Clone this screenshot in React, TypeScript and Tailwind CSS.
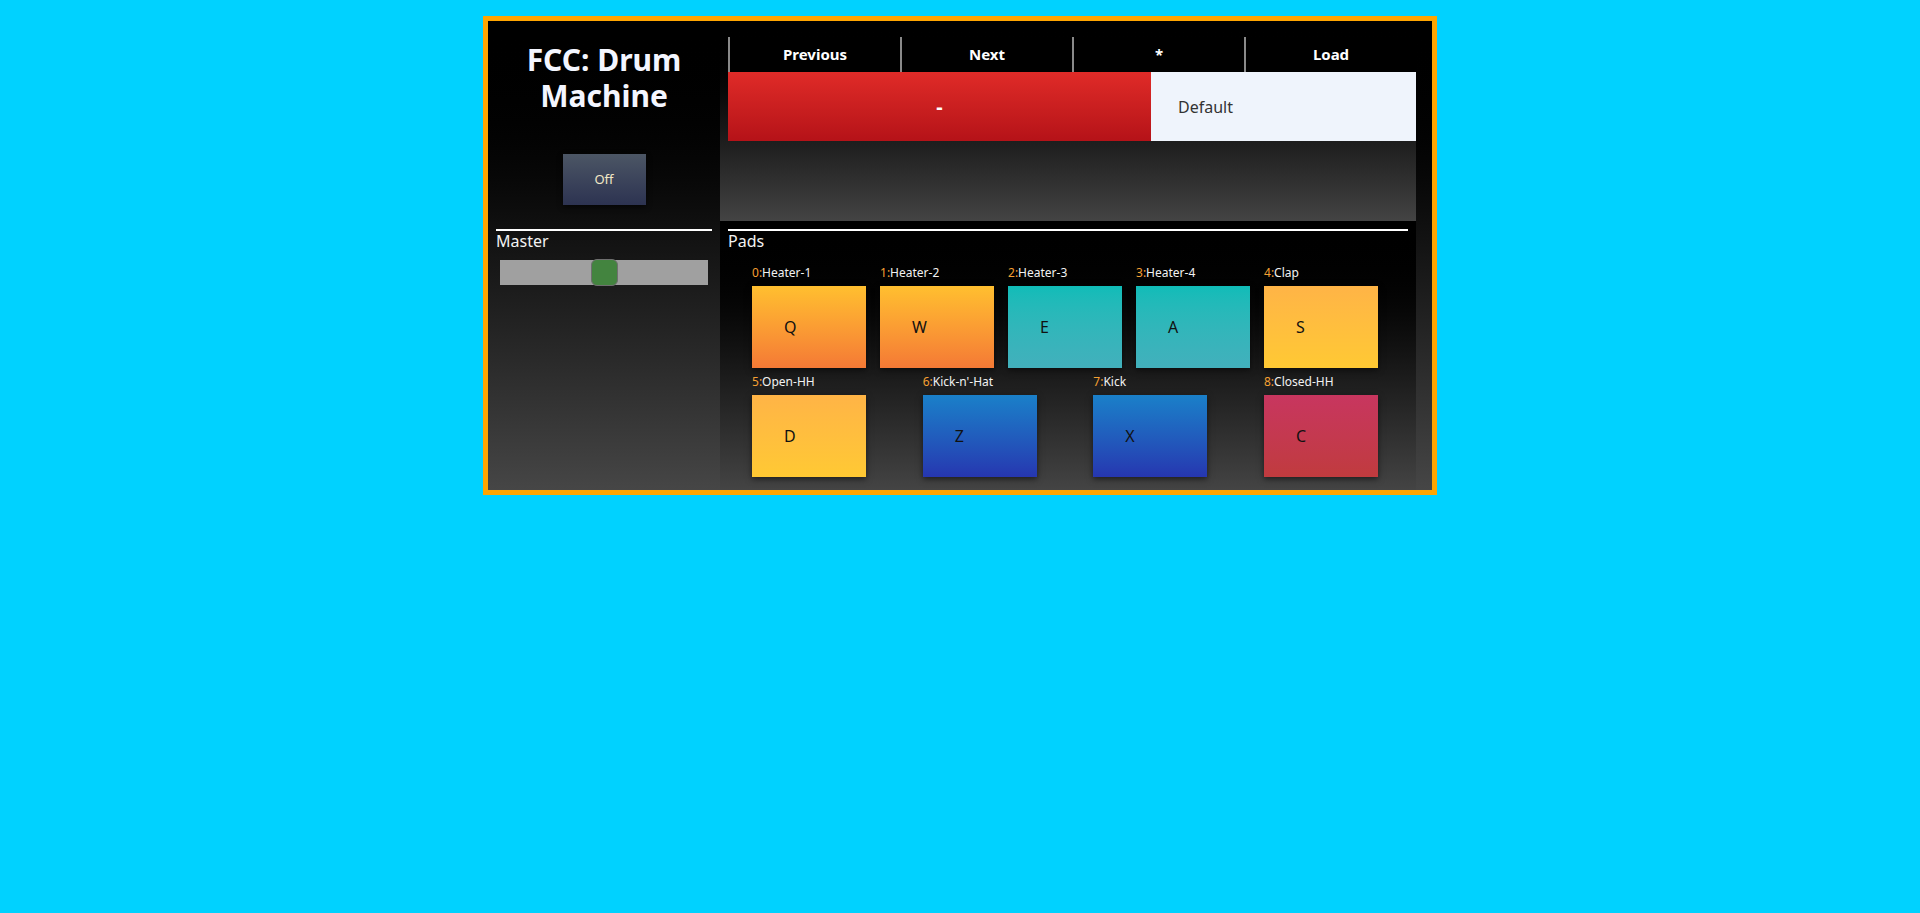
import { useState } from 'react';

type Pad = { id: number; name: string; key: string; color: string };

const rowOne: Pad[] = [
  { id: 0, name: 'Heater-1', key: 'Q', color: 'bg-gradient-to-b from-[#ffbf2f] to-[#f47935]' },
  { id: 1, name: 'Heater-2', key: 'W', color: 'bg-gradient-to-b from-[#ffbf2f] to-[#f47935]' },
  { id: 2, name: 'Heater-3', key: 'E', color: 'bg-gradient-to-b from-[#0fbcb8] to-[#42b0bc]' },
  { id: 3, name: 'Heater-4', key: 'A', color: 'bg-gradient-to-b from-[#0fbcb8] to-[#42b0bc]' },
  { id: 4, name: 'Clap', key: 'S', color: 'bg-gradient-to-b from-[#ffb446] to-[#ffc933]' },
];

const rowTwo: Pad[] = [
  { id: 5, name: 'Open-HH', key: 'D', color: 'bg-gradient-to-b from-[#ffb446] to-[#ffc933]' },
  { id: 6, name: "Kick-n'-Hat", key: 'Z', color: 'bg-gradient-to-b from-[#1a80c9] to-[#2636b0]' },
  { id: 7, name: 'Kick', key: 'X', color: 'bg-gradient-to-b from-[#1a80c9] to-[#2636b0]' },
  { id: 8, name: 'Closed-HH', key: 'C', color: 'bg-gradient-to-b from-[#c8365f] to-[#c03b3e]' },
];

function DrumPad({ pad }: { pad: Pad }) {
  return (
    <div className="w-[114px]">
      <div className="text-[12px] leading-[16px] text-[#f2f2f2]">
        <span className="text-[#f5a032]">{pad.id}:</span>
        {pad.name}
      </div>
      <button
        className={`mt-[5px] flex h-[82px] w-[114px] items-center pl-[32px] text-[16px] text-[#111] shadow-[0_2px_6px_rgba(0,0,0,0.55)] ${pad.color}`}
      >
        {pad.key}
      </button>
    </div>
  );
}

export default function App() {
  const [power, setPower] = useState(false);
  const [volume, setVolume] = useState(50);

  return (
    <div
      className="min-h-screen bg-[#00d2ff] pt-4"
      style={{ fontFamily: '"Noto Sans", "Open Sans", sans-serif' }}
    >
      <div className="mx-auto flex w-[954px] border-[5px] border-[#ffa500] bg-gradient-to-b from-[#000] to-[#464646]">
        {/* left column */}
        <div className="w-[232px]">
          <div className="flex h-[200px] flex-col items-center pt-[21px]">
            <h1 className="text-center text-[30px] font-bold leading-[36px] text-[#f4f6ff]">
              FCC: Drum
              <br />
              Machine
            </h1>
            <button
              onClick={() => setPower(!power)}
              className="mt-[40px] h-[51px] w-[83px] bg-gradient-to-b from-[#4c5665] to-[#2d3351] text-[13px] text-[#f3e7c6] shadow-[0_2px_5px_rgba(0,0,0,0.6)]"
            >
              {power ? 'On' : 'Off'}
            </button>
          </div>
          <div className="mt-[8px]">
            <div className="mx-2 h-[2px] bg-white" />
            <div className="px-2 text-[16px] leading-[20px] text-[#f2f2f2]">Master</div>
            <div className="relative ml-[12px] mt-[9px] h-[25px] w-[208px] bg-[#a0a0a0]">
              <div
                className="absolute top-[-1px] h-[27px] w-[27px] rounded-md border border-[#6f6f6f] bg-[#43843f]"
                style={{ left: `${((208 - 27) * volume) / 100}px` }}
                onClick={() => setVolume(volume)}
              />
            </div>
          </div>
        </div>

        {/* right column */}
        <div className="w-[696px]">
          <div className="h-[200px] bg-gradient-to-b from-[#000] to-[#444] pl-2 pt-4">
            <div className="flex h-[35px] bg-black">
              {['Previous', 'Next', '*', 'Load'].map(label => (
                <button
                  key={label}
                  className="flex-1 border-l-2 border-[#8a8a8a] text-[15px] font-bold text-white"
                >
                  {label}
                </button>
              ))}
            </div>
            <div className="flex h-[69px]">
              <div className="flex w-[423px] items-center justify-center bg-gradient-to-b from-[#e02b28] to-[#b51218] text-[20px] font-bold text-white">
                -
              </div>
              <div className="flex flex-1 items-center bg-[#eff4fc] pl-[27px] text-[16px] text-[#333]">
                Default
              </div>
            </div>
          </div>

          <div className="h-[269px] bg-gradient-to-b from-[#000] to-[#444] pt-[8px]">
            <div className="mx-2 h-[2px] bg-white" />
            <div className="px-2 text-[16px] leading-[20px] text-[#f2f2f2]">Pads</div>
            <div className="ml-[32px] mt-[14px] w-[626px]">
              <div className="flex justify-between">
                {rowOne.map(p => (
                  <DrumPad key={p.id} pad={p} />
                ))}
              </div>
              <div className="mt-[6px] flex justify-between">
                {rowTwo.map(p => (
                  <DrumPad key={p.id} pad={p} />
                ))}
              </div>
            </div>
          </div>
        </div>
      </div>
    </div>
  );
}
